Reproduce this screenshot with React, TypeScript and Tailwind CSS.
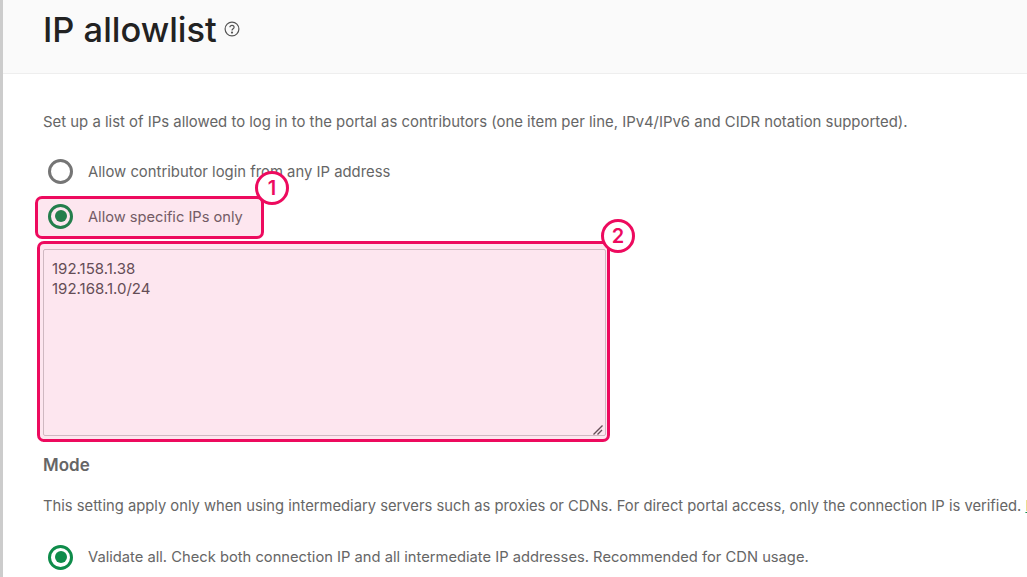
function Radio({ checked }: { checked?: boolean }) {
  return (
    <span
      className={`flex h-[25px] w-[25px] shrink-0 items-center justify-center rounded-full border-[3px] bg-white ${
        checked ? 'border-[#0e8c4a]' : 'border-[#757575]'
      }`}
    >
      {checked && <span className="h-[12px] w-[12px] rounded-full bg-[#0e8c4a]" />}
    </span>
  )
}

function Badge({ n, className }: { n: number; className: string }) {
  return (
    <span
      className={`absolute flex h-[34px] w-[34px] items-center justify-center rounded-full border-[3px] border-[#ed0a5e] bg-white text-[20px] font-semibold text-[#ed0a5e] ${className}`}
    >
      {n}
    </span>
  )
}

function Highlight({ className }: { className: string }) {
  return <div className={`pointer-events-none absolute rounded-[7px] border-[3px] border-[#ed0a5e] bg-[#ed0a5e]/10 ${className}`} />
}

export default function App() {
  return (
    <div className="relative h-[577px] w-[1027px] overflow-hidden bg-white font-['Inter',sans-serif] text-[14.75px] text-[#666666]">
      <div className="flex h-full border-l-[3px] border-[#cccccc]">
        <div className="min-w-0 flex-1">
          <header className="flex h-[74px] items-start gap-[7px] border-b border-[#eeeeee] bg-[#fafafa] pl-10 pt-[8px]">
            <h1 className="text-[34.4px] leading-[44px] font-medium whitespace-nowrap text-[#222222]">IP allowlist</h1>
            <svg className="mt-[13px] h-[16px] w-[16px] text-[#555555]" viewBox="0 0 16 16" fill="none" stroke="currentColor" strokeWidth="1.2">
              <circle cx="8" cy="8" r="6.9" />
              <path d="M5.9 6.3c0-1.2 1-2 2.1-2s2.1.8 2.1 1.9c0 1.6-2.1 1.6-2.1 3.4" />
              <circle cx="8" cy="11.6" r=".5" fill="currentColor" />
            </svg>
          </header>

          <main className="pl-10 whitespace-nowrap">
            <p className="pt-[38px] text-[14.9px] leading-[20px]">
              Set up a list of IPs allowed to log in to the portal as contributors (one item per line, IPv4/IPv6 and CIDR notation supported).
            </p>
            <div className="mt-[26px] flex h-[26px] items-center gap-[15px] pl-[5px]">
              <Radio />
              <span className="pt-[3px] text-[14.85px]">Allow contributor login from any IP address</span>
            </div>
            <div className="mt-[19px] flex h-[26px] items-center gap-[15px] pl-[5px]">
              <Radio checked />
              <span className="pt-[3px] text-[14.65px]">Allow specific IPs only</span>
            </div>
            <div className="relative mt-[20px] h-[187px] w-[563px]">
              <textarea
                readOnly
                defaultValue={'192.158.1.38\n192.168.1.0/24'}
                className="block h-full w-full resize-none rounded-[2px] border border-[#cccccc] bg-white px-2 py-[9px] text-[15px] leading-[20px] text-[#555555] outline-none"
              />
              <svg className="absolute right-[3px] bottom-[1px] h-[10px] w-[10px] text-[#555555]" viewBox="0 0 10 10" stroke="currentColor" strokeWidth="1.4">
                <path d="M0.5 9.5 L9.5 0.5 M4.5 9.5 L9 5" />
              </svg>
            </div>
            <h2 className="mt-[19px] text-[17px] leading-[20px] font-semibold text-[#666666]">Mode</h2>
            <p className="mt-[21px] leading-[20px]">
              This setting apply only when using intermediary servers such as proxies or CDNs. For direct portal access, only the connection IP is verified.{' '}
              <span className="text-[#0e8c4a] underline">Learn more</span>
            </p>
            <div className="mt-[28px] flex h-[26px] items-center gap-[15px] pl-[5px]">
              <Radio checked />
              <span className="pt-[1px] text-[14.73px]">Validate all. Check both connection IP and all intermediate IP addresses. Recommended for CDN usage.</span>
            </div>
          </main>
        </div>
      </div>

      {/* annotation overlays */}
      <Highlight className="top-[196px] left-[35px] h-[43px] w-[229px]" />
      <Highlight className="top-[241px] left-[37px] h-[201px] w-[573px]" />
      <Badge n={1} className="top-[171px] left-[255px]" />
      <Badge n={2} className="top-[219px] left-[601px]" />
    </div>
  )
}
